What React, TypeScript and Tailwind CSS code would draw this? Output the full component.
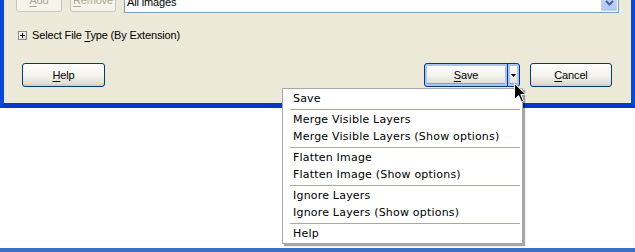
import React from "react";

const menuGroups: string[][] = [
  ["Save"],
  ["Merge Visible Layers", "Merge Visible Layers (Show options)"],
  ["Flatten Image", "Flatten Image (Show options)"],
  ["Ignore Layers", "Ignore Layers (Show options)"],
  ["Help"],
];

function XpButton({
  children,
  className = "",
  focused = false,
}: {
  children: React.ReactNode;
  className?: string;
  focused?: boolean;
}) {
  return (
    <div
      className={`flex items-center justify-center border border-[#003c74] bg-gradient-to-b from-[#ffffff] via-[#f4f3ee] to-[#dcd8cb] text-[11px] text-black ${
        focused ? "shadow-[inset_0_0_0_2px_#a9c4f5,inset_0_-1px_0_2px_#7b9ae8]" : "shadow-[inset_0_-2px_0_#d6d0c5]"
      } ${className}`}
    >
      {children}
    </div>
  );
}

function Mn({ k, rest }: { k: string; rest: string }) {
  return (
    <span>
      <span className="underline underline-offset-[2px]">{k}</span>
      {rest}
    </span>
  );
}

export default function App() {
  return (
    <div className="relative flex h-[252px] w-[635px] flex-col overflow-hidden bg-white font-['Liberation_Sans',Arial,sans-serif]">
      {/* dialog window */}
      <div className="flex h-[108px] flex-col border-x-4 border-b-[5px] border-x-[#0a48d8] border-b-[#0838c8] bg-[#ece9d8] tracking-[-0.15px]">
        {/* file type row */}
        <div className="mt-[-10px] flex h-[23px] items-end pl-[12px] pr-[12px]">
          <div className="mb-px flex h-[23px] w-[46px] items-center justify-center rounded-[3px] border border-[#c9c7ba] bg-[#f5f4ea] text-[11px] text-[#aca899]">
            <Mn k="A" rest="dd" />
          </div>
          <div className="mb-px ml-[8px] flex h-[23px] w-[46px] items-center justify-center rounded-[3px] border border-[#c9c7ba] bg-[#f5f4ea] text-[11px] text-[#aca899]">
            <Mn k="R" rest="emove" />
          </div>
          <div className="ml-[8px] flex h-[21px] flex-1 items-center border border-[#7f9db9] bg-white pl-[2px] pr-px">
            <span className="flex-1 text-[11px] text-black">All images</span>
            <div className="flex h-[17px] w-[16px] items-center justify-center rounded-[2px] bg-gradient-to-b from-[#c6d6fc] to-[#b0c8f6] shadow-[inset_0_0_0_1px_#bad0f8]">
              <svg width="9" height="6" viewBox="0 0 9 6">
                <path d="M1 1 L4.5 4.5 L8 1" stroke="#4d6185" strokeWidth="2" fill="none" />
              </svg>
            </div>
          </div>
        </div>

        {/* select file type */}
        <div className="mt-[16px] flex h-[13px] items-center pl-[14px]">
          <div className="flex h-[9px] w-[9px] items-center justify-center border border-[#7a8a99] bg-gradient-to-br from-white to-[#d8d8d0]">
            <svg width="7" height="7" viewBox="0 0 7 7">
              <path d="M1 3.5 H6 M3.5 1 V6" stroke="#000" strokeWidth="1" />
            </svg>
          </div>
          <span className="ml-[5px] text-[11px] text-black">
            Select File <span className="underline underline-offset-[2px]">T</span>ype (By Extension)
          </span>
        </div>

        {/* bottom buttons */}
        <div className="mt-[21px] flex h-[24px] items-center pl-[18px] pr-[19px]">
          <XpButton className="h-[24px] w-[83px] rounded-[3px]">
            <Mn k="H" rest="elp" />
          </XpButton>
          <div className="flex-1" />
          <XpButton focused className="h-[24px] w-[84px] rounded-l-[3px]">
            <Mn k="S" rest="ave" />
          </XpButton>
          <XpButton focused className="ml-[-1px] h-[24px] w-[13px] rounded-r-[3px]">
            <svg width="5" height="3" viewBox="0 0 5 3">
              <path d="M0 0 H5 L2.5 3 Z" fill="#000" />
            </svg>
          </XpButton>
          <XpButton className="ml-[10px] h-[24px] w-[82px] rounded-[3px]">
            <Mn k="C" rest="ancel" />
          </XpButton>
        </div>
      </div>

      <div className="flex-1" />
      <div className="h-[4px] bg-[#3a6fc6]" />

      {/* dropdown menu */}
      <div className="absolute left-[282px] top-[88px] w-[241px] border border-[#a7a6aa] bg-white pt-[2px] font-['DejaVu_Sans',Verdana,sans-serif] text-[11px] text-black shadow-[2px_2px_1px_rgba(0,0,0,0.35)]">
        {menuGroups.map((group, gi) => (
          <div key={gi}>
            {gi > 0 && <div className="mb-[2px] ml-[7px] mr-[2px] mt-px h-px bg-[#aca899]" />}
            {group.map((item) => (
              <div key={item} className="flex h-[17px] items-center pl-[10px] tracking-[0.2px]">
                {item}
              </div>
            ))}
          </div>
        ))}
      </div>

      {/* mouse cursor */}
      <svg className="absolute left-[514px] top-[83px]" width="13" height="20" viewBox="0 0 13 20">
        <path
          d="M0.5 0.5 V16.5 L4.5 12.5 L7.5 19 L9.5 18 L6.8 11.5 H12 Z"
          fill="#000"
          stroke="#fff"
          strokeWidth="1"
        />
      </svg>
    </div>
  );
}
